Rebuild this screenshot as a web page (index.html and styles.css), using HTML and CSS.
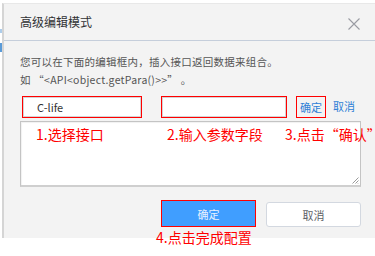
FILE: index.html
```html
<!DOCTYPE html>
<html lang="zh">
<head>
<meta charset="utf-8">
<title>高级编辑模式</title>
<link rel="stylesheet" href="styles.css">
</head>
<body>
<span class="bg-strip bg-strip-a"></span>
<span class="bg-strip bg-strip-b"></span>
<div class="dialog">
  <div class="header">
    <span class="title">高级编辑模式</span>
    <svg class="close" width="12" height="12" viewBox="0 0 12 12"><path d="M0.5 0.5L11.5 11.5M11.5 0.5L0.5 11.5" stroke="#9a9ca3" stroke-width="1.1" fill="none"/></svg>
  </div>
  <div class="body">
    <p class="desc">您可以在下面的编辑框内，插入接口返回数据来组合。<br>如 “&lt;API&lt;object.getPara()&gt;&gt;” 。</p>
    <div class="row">
      <div class="mark mark-sel"><div class="field">C-life</div></div>
      <div class="mark mark-param"><div class="field"></div></div>
      <div class="mark mark-ok"><span class="link">确定</span></div>
      <span class="link cancel-link">取消</span>
    </div>
    <div class="editor">
      <span class="note n1">1.选择接口</span>
      <span class="note n2">2.输入参数字段</span>
      <span class="note n3">3.点击“确认”</span>
      <svg class="grip" width="8" height="8" viewBox="0 0 8 8"><path d="M7.5 1.5L1.5 7.5M7.5 4.5L4.5 7.5M7.5 7L7 7.5" stroke="#9a9a9a" stroke-width="1" fill="none"/></svg>
    </div>
  </div>
  <div class="footer">
    <div class="btn-wrap">
      <div class="btn btn-primary">确定</div>
      <span class="note n4">4.点击完成配置</span>
    </div>
    <div class="btn btn-default">取消</div>
  </div>
</div>
</body>
</html>
```

FILE: styles.css
```css
html, body {
  margin: 0;
  padding: 0;
  overflow: hidden;
  background: #ffffff;
  width: 375px;
  height: 256px;
  font-family: "Noto Sans CJK SC", "Noto Sans", sans-serif;
}

.bg-strip {
  position: absolute;
  left: 0;
  width: 2px;
  background: #5b9bd8;
}
.bg-strip-a { top: 29px; height: 4px; opacity: 0.5; }
.bg-strip-b { top: 43px; height: 9px; }

.dialog {
  margin: 3px 0 0 2px;
  width: 400px;
  height: 235px;
  background: #f3f3f3;
  border-left: 2px solid #d5d5d5;
  border-top: 1px solid #e8e8e8;
  box-sizing: border-box;
  display: flex;
  flex-direction: column;
}

.header {
  height: 37px;
  flex: none;
  box-sizing: border-box;
  border-bottom: 1px solid #c5cedb;
  display: flex;
  align-items: center;
  padding-left: 16px;
  position: relative;
}
.title {
  font-size: 12px;
  color: #303133;
  line-height: 16px;
  margin-top: -1px;
}
.close {
  position: absolute;
  left: 344px;
  top: 14px;
}

.body {
  padding: 12px 0 0 16px;
}
.desc {
  margin: 0;
  font-size: 10.5px;
  line-height: 18px;
  letter-spacing: 0.25px;
  color: #555;
}

.row {
  margin-top: 7px;
  height: 22px;
  display: flex;
  align-items: stretch;
}
.mark {
  border: 1px solid #f00;
  box-sizing: border-box;
  display: flex;
}
.mark-sel { width: 120px; margin-left: 2px; }
.mark-param { width: 126px; margin-left: 19px; }
.mark-ok {
  width: 30px;
  margin-left: 9px;
  align-items: center;
  justify-content: center;
}
.field {
  flex: 1;
  background: #fff;
  border: 1px solid #d4d4d4;
  font-size: 11px;
  color: #333;
  line-height: 18px;
  padding-left: 13px;
}
.link {
  font-size: 11px;
  color: #2f7fd6;
  line-height: 20px;
}
.cancel-link {
  margin-left: 7px;
}

.editor {
  margin-top: 3px;
  width: 341px;
  height: 66px;
  box-sizing: border-box;
  background: #fff;
  border: 1px solid #c4c4c4;
  border-bottom: 2px solid #cfcfcf;
  box-shadow: inset 1px 1px 1px rgba(0,0,0,0.06);
  position: relative;
}
.note {
  position: absolute;
  font-size: 14px;
  line-height: 18px;
  color: #ff0000;
  white-space: nowrap;
}
.n1 { left: 15px; top: 3px; }
.n2 { left: 146px; top: 3px; }
.n3 { left: 264px; top: 3px; }
.grip { position: absolute; right: 1px; bottom: 1px; }

.footer {
  margin-top: 13px;
  padding-left: 157px;
  display: flex;
  align-items: flex-end;
  gap: 10px;
}
.btn-wrap {
  position: relative;
  border: 1px solid #f00;
  width: 95px;
  height: 27px;
  box-sizing: border-box;
  display: flex;
}
.btn {
  font-size: 11px;
  display: flex;
  align-items: center;
  justify-content: center;
  box-sizing: border-box;
}
.btn-primary {
  flex: 1;
  background: #409eff;
  color: #e8f2ff;
}
.btn-default {
  width: 95px;
  height: 25px;
  background: #fff;
  border: 1px solid #d3d8e0;
  border-radius: 3px;
  color: #606266;
}
.n4 { left: -6px; top: 27px; }
```
